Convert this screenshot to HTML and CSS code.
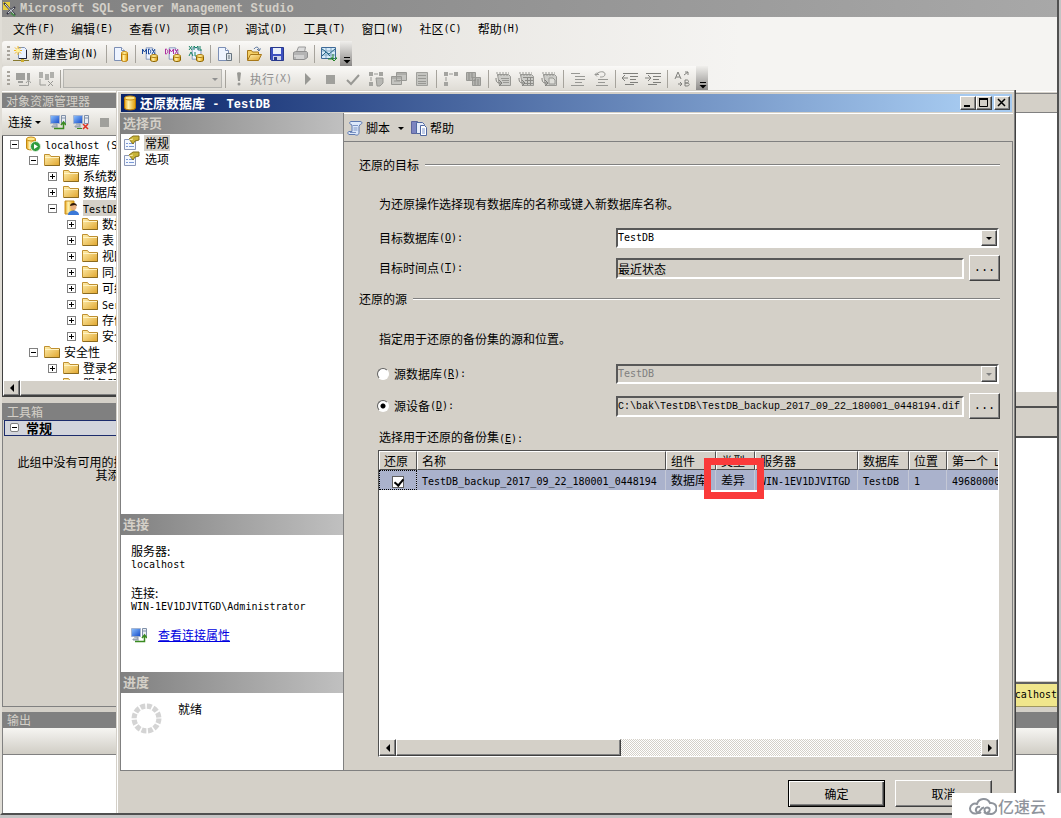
FILE: index.html
```html
<!DOCTYPE html>
<html lang="zh-CN">
<head>
<meta charset="utf-8">
<title>Microsoft SQL Server Management Studio</title>
<link rel="stylesheet" href="styles.css">
</head>
<body>
<svg class="defs" aria-hidden="true">
  <defs>
    <linearGradient id="gold" x1="0" x2="1" y1="0" y2="0"><stop offset="0" stop-color="#e8a010"/><stop offset=".35" stop-color="#fff3b0"/><stop offset="1" stop-color="#e09a00"/></linearGradient>
    <linearGradient id="fold" x1="0" x2="1" y1="0" y2="1"><stop offset="0" stop-color="#fff0b0"/><stop offset="1" stop-color="#e0a52c"/></linearGradient>
    <linearGradient id="screen" x1="0" x2="1" y1="0" y2="1"><stop offset="0" stop-color="#8fc4ff"/><stop offset="1" stop-color="#1148c8"/></linearGradient>
  </defs>
  <symbol id="page" viewBox="0 0 16 16"><path d="M2.500 1.500h7l3 3v10h-10z" fill="#eef4ff" stroke="#7c8fb5"/><path d="M9.500 1.500v3h3" fill="#fff" stroke="#7c8fb5"/></symbol>
  <symbol id="cyl" viewBox="0 0 16 16"><path d="M2.500 3v10c0 2.500 11 2.500 11 0V3z" fill="url(#gold)" stroke="#b87800"/><ellipse cx="8" cy="3" rx="5.500" ry="2" fill="#ffe98a" stroke="#c88a10"/></symbol>
  <symbol id="app" viewBox="0 0 16 16"><path d="M1 1h7v8H1z" fill="#e9cf3c"/><path d="M2 2l11 12M13 6l-8 7" stroke="#334" stroke-width="2"/><path d="M3 3l9 10M12 7l-6 5" stroke="#e8eef0"/><path d="M9 12l4 3" stroke="#4a8a4a" stroke-width="2"/></symbol>
  <symbol id="newq" viewBox="0 0 16 16"><path d="M5.500 1.500h6l2 2v9h-8z" fill="#eaf2ff" stroke="#7c8fb5"/><path d="M13.500 4v8.500H6" fill="none" stroke="#223"/><path d="M5 0v9M1 4.500h8M2 1.500l6 6M8 1.500l-6 6" stroke="#f5b820"/><circle cx="5" cy="4.500" r="2" fill="#fff2a0"/><path d="M0 14.500h16" stroke="#887a30"/><path d="M8 13h3v3H8z" fill="#d0b030"/></symbol>
  <symbol id="dbpage" viewBox="0 0 16 16"><use href="#page" x="-1" width="16" height="16"/><path d="M8.500 7v7c0 2 6 2 6 0V7z" fill="url(#gold)" stroke="#b87800"/><ellipse cx="11.500" cy="7" rx="3" ry="1.500" fill="#ffe98a" stroke="#c88a10"/></symbol>
  <symbol id="minicyl" viewBox="0 0 8 8"><path d="M.500 2v4c0 2 7 2 7 0V2z" fill="url(#gold)" stroke="#8a6400"/><ellipse cx="4" cy="2" rx="3.500" ry="1.500" fill="#ffe98a" stroke="#a87810"/></symbol>
  <symbol id="mdx" viewBox="0 0 16 16"><use href="#page" x="2" width="14" height="15"/><path d="M.500 8V3l2 3 2-3v5M6.500 3v5c3 0 3-5 0-5M10 3l3 5M13 3l-3 5" fill="none" stroke="#1c4a9c"/><use href="#minicyl" x="8" y="8" width="8" height="8"/></symbol>
  <symbol id="dmx" viewBox="0 0 16 16"><use href="#page" x="2" width="14" height="15"/><path d="M.500 3v5c3 0 3-5 0-5M4.500 8V3l2 3 2-3v5M10 3l3 5M13 3l-3 5" fill="none" stroke="#b030a0"/><use href="#minicyl" x="8" y="8" width="8" height="8"/></symbol>
  <symbol id="xmla" viewBox="0 0 16 16"><use href="#page" x="2" width="14" height="15"/><path d="M1 0l3 4M4 0L1 4M6 4V0l2 2 2-2v4M12 0v4h2M1 10l2-4 2 4M7 6v4h3" fill="none" stroke="#188468"/><use href="#minicyl" x="8" y="8" width="8" height="8"/></symbol>
  <symbol id="cepage" viewBox="0 0 16 16"><use href="#page" x="-1" width="16" height="16"/><path d="M9.500 7.500h5v7h-5z" fill="#dde4ea" stroke="#66737f"/><path d="M11 10h2M11 12h2" stroke="#66737f"/></symbol>
  <symbol id="open" viewBox="0 0 16 16"><path d="M1.500 14V4.500h4l1 1.500h6v3" fill="#f4cf66" stroke="#a87818"/><path d="M1.500 14.500l3-6h11l-3 6z" fill="url(#fold)" stroke="#a87818"/><path d="M8 3c2-3 5-2 5 1M11 3l2 2 1.500-2.500" fill="none" stroke="#54709c"/></symbol>
  <symbol id="save" viewBox="0 0 16 16"><path d="M1.500 1.500h13v13h-12l-1-1z" fill="#3c50c0" stroke="#28388c"/><path d="M4 2h8v6H4z" fill="#eaf0fa"/><path d="M4 10h8v4H4z" fill="#cdd4e8"/><path d="M5 11h3v3H5z" fill="#28388c"/></symbol>
  <symbol id="print" viewBox="0 0 16 16"><path d="M4.500 6l2-5h7l-1 5" fill="#ddd" stroke="#999"/><path d="M1.500 6.500l2-1h11l1 1v5l-3 2h-11z" fill="#b4b4b4" stroke="#909090"/><path d="M2 10h10M4 12h8" stroke="#eee"/></symbol>
  <symbol id="chart" viewBox="0 0 16 16"><path d="M.500 1.500h14v11H.500z" fill="#d8ecfa" stroke="#3f6a98"/><path d="M1 9h13M1 5h13M5 2v10M10 2v10" stroke="#84a8c4"/><path d="M1 3l3 2 5 5M1 10l4-4 3 2 6-5" fill="none" stroke="#2a6a8a"/><path d="M7 13h6M12 8v4h-2l3 3 3-3h-2" stroke="#248428" fill="none"/></symbol>
  <symbol id="ovf" viewBox="0 0 12 24"><path d="M4 15.500h6" stroke="#000"/><path d="M3.500 18h7L7 21.500z"/></symbol>
  <symbol id="srv" viewBox="0 0 16 16"><path d="M.500 1.500h9v8h-9z" fill="url(#screen)" stroke="#a4b4d0"/><path d="M3 10h4v2H2v1h6" fill="#c9cfd8" stroke="#8b98aa"/><path d="M11.500 1.500h4v8h-4z" fill="#e8edf4" stroke="#8090a8"/><path d="M12 4h3" stroke="#8090a8"/></symbol>
  <symbol id="conn" viewBox="0 0 16 16"><use href="#srv" width="16" height="16"/><path d="M4 14.500h9.500V9M11 11l2.500-3 2.500 3" fill="none" stroke="#3a8a20" stroke-width="1.500"/></symbol>
  <symbol id="disc" viewBox="0 0 16 16"><use href="#srv" width="16" height="16"/><path d="M4 14.500h5" stroke="#3a8a20"/><path d="M10 10l5 5M15 10l-5 5" stroke="#e03020" stroke-width="1.500"/></symbol>
  <symbol id="gconn" viewBox="0 0 16 16"><path d="M1 2h9v7H1zM3 10h5v2H3zM12 2h3v7h-3z" fill="#a0a09c"/><path d="M4 14.500h9.500V10M11 12l2.500-3 2.500 3" fill="none" stroke="#a0a09c"/></symbol>
  <symbol id="gchg" viewBox="0 0 16 16"><path d="M1 1h4v6H1zM7 3h4v6H7zM12 1h4v6h-4z" fill="#b0b0ac"/><path d="M2 8v6h6M10 10l5 5M15 10l-5 5" fill="none" stroke="#989894"/></symbol>
  <symbol id="bang" viewBox="0 0 16 16"><path d="M6 2c0-1 4-1 4 0L9 10H7z" fill="#989894"/><circle cx="8" cy="13" r="1.500" fill="#989894"/></symbol>
  <symbol id="play" viewBox="0 0 16 16"><path d="M6 2l6 6-6 6z" fill="#989894"/></symbol>
  <symbol id="stop" viewBox="0 0 16 16"><path d="M4 4h9v9H4z" fill="#a0a09c"/></symbol>
  <symbol id="check" viewBox="0 0 16 16"><path d="M2 9l4 4 8-9" fill="none" stroke="#989894" stroke-width="2"/></symbol>
  <symbol id="plan" viewBox="0 0 16 16"><path d="M1 1h4v4H1zM11 1h4v4h-4zM1 11h4v4H1z" fill="#a4a4a0"/><path d="M6 3h4M3 6v4" stroke="#989894"/><path d="M8 7h7v5l-3 3H9z" fill="#b8b8b4" stroke="#989894"/></symbol>
  <symbol id="wins" viewBox="0 0 16 16"><path d="M5.500 1.500h10v8h-10zM.500 5.500h10v8H.500z" fill="#c4c4c0" stroke="#989894"/><path d="M6 3h9M1 7h9M3 10h6" stroke="#989894"/></symbol>
  <symbol id="sheet" viewBox="0 0 16 16"><path d="M2.500 1.500h11v13h-11z" fill="#c4c4c0" stroke="#a0a09c"/><path d="M4 4.500h8M4 7.500h8M4 10.500h8M4 12.500h8" stroke="#989894"/></symbol>
  <symbol id="plan2" viewBox="0 0 16 16"><path d="M1 1h4v4H1zM11 1h4v4h-4zM1 11h4v4H1z" fill="#a4a4a0"/><path d="M6 3h4M3 6v4" stroke="#989894"/></symbol>
  <symbol id="stats" viewBox="0 0 16 16"><path d="M.500 1.500h9v8h-9zM6.500 6.500h8v8h-8z" fill="#b4b4b0" stroke="#989894"/><path d="M3 2v7M6 2v5M9 8v6M12 8v6" stroke="#8c8c88"/></symbol>
  <symbol id="resbase" viewBox="0 0 16 16"><path d="M2.500 3.500h11l2 2v9h-11z" fill="#ccccc8" stroke="#989894"/><path d="M1 2h13M2 4h12" stroke="#989894" stroke-dasharray="2 1"/><path d="M1 7c0 5 2 5 5 5M4 9l3 3-3 3" fill="none" stroke="#80807c"/></symbol>
  <symbol id="restext" viewBox="0 0 16 16"><use href="#resbase" width="16" height="16"/><path d="M6 7.500h8M7 9.500h7M8 11.500h6" stroke="#989894"/></symbol>
  <symbol id="resgrid" viewBox="0 0 16 16"><use href="#resbase" width="16" height="16"/><path d="M5 6.500h10M7 9.500h8M7 12.500h8M9.500 6v8M12.500 6v8" stroke="#8c8c88"/></symbol>
  <symbol id="resfile" viewBox="0 0 16 16"><use href="#resbase" width="16" height="16"/><path d="M8 7h4l2 2v4H8z" fill="#deded9" stroke="#989894"/></symbol>
  <symbol id="lines" viewBox="0 0 16 16"><path d="M1 2.500h9M5 5.500h10M5 8.500h10M5 11.500h7M1 14.500h13" stroke="#989894"/></symbol>
  <symbol id="unline" viewBox="0 0 16 16"><path d="M5 8.500h10M5 11.500h7M3 14.500h12M2 3.500h4M4 5.500L2 3.500l2-2M4 3c2-3 8-3 8 0s-3 3-5 3" fill="none" stroke="#989894"/></symbol>
  <symbol id="outd" viewBox="0 0 16 16"><path d="M1 2.500h15M8 5.500h8M8 8.500h6M8 11.500h8M3 13.500h9M0 7h6M3 4L0 7l3 3" fill="none" stroke="#80807c"/></symbol>
  <symbol id="ind" viewBox="0 0 16 16"><path d="M1 2.500h15M8 5.500h8M8 8.500h6M8 11.500h8M3 13.500h9M0 7h6M3 4l3 3-3 3" fill="none" stroke="#80807c"/></symbol>
  <symbol id="ab" viewBox="0 0 16 16"><path d="M1 8l3-7 3 7M2 6h4M11 15V9h2c2 0 2 3 0 3h-2 2c3 0 3 3 0 3zM10 4l4-3M11 1h3v3M4 13h4M6 11l2 2-2 2" fill="none" stroke="#80807c"/></symbol>
  <symbol id="folder" viewBox="0 0 16 16"><path d="M.500 13.500v-11h5l1.500 2h8.500v9z" fill="url(#fold)" stroke="#c09030"/><path d="M1 5.500h14" stroke="#fff3c4"/><path d="M1 13.500h14.500V5" fill="none" stroke="#8a6a20"/></symbol>
  <symbol id="dbsrv" viewBox="0 0 16 16"><path d="M1.500 3v9c0 2.500 9 2.500 9 0V3z" fill="url(#gold)" stroke="#c08810"/><ellipse cx="6" cy="3" rx="4.500" ry="2" fill="#ffe98a" stroke="#c88a10"/><circle cx="10.500" cy="10.500" r="5" fill="#2e9a3c" stroke="#dff0df"/><path d="M9 8l4 2.500L9 13z" fill="#fff"/></symbol>
  <symbol id="dbuser" viewBox="0 0 16 16"><path d="M2 1h9v13H2z" fill="url(#gold)" stroke="#c89020"/><circle cx="10.500" cy="7" r="3" fill="#e8b080"/><path d="M7 6c0-4 7-4 7 0l-2-1z" fill="#301808"/><path d="M5 15c0-6 11-6 11 0z" fill="#3a78d8"/></symbol>
  <symbol id="prop" viewBox="0 0 16 16"><path d="M.500 4.500h11v10H.500z" fill="#f4f8ff" stroke="#8c98b8"/><path d="M2 8.500h2M5 8.500h5M2 11.500h2M5 11.500h5" stroke="#7a9ad8"/><path d="M5 4l4-3h6v4l-4 1-2 3z" fill="#c8b438" stroke="#847018"/><path d="M5 5l4-1" stroke="#fff0b0"/></symbol>
  <symbol id="script" viewBox="0 0 16 16"><path d="M4 1.500h9c3 0 2 3 0 3l-1 2v6c0 3-3 3-4 2H2c-2-1-1-3 0-3h3V5C2 4 2 2 4 1.500z" fill="#dce8fa" stroke="#5c78b0"/><path d="M6 5.500h5M6.500 8h4M6.500 10h4M3 12.500h6" stroke="#7c94c4"/></symbol>
  <symbol id="help" viewBox="0 0 16 16"><path d="M.500 1.500h6v12h-6z" fill="#7c84c0" stroke="#5c649c"/><path d="M5.500 2.500h6l2 2v9h-8z" fill="#e6ecfa" stroke="#5068a0"/><path d="M9.500 5.500h4l2 2v8h-6z" fill="#fff" stroke="#5068a0"/><path d="M11 9h3M11 11h3M11 13h3" fill="none" stroke="#8098d0"/></symbol>
  <symbol id="down" viewBox="0 0 8 8"><path d="M1 3h6L4 6z" fill="currentColor"/></symbol>
  <symbol id="lft" viewBox="0 0 8 8"><path d="M6 0v8L2 4z"/></symbol>
  <symbol id="rgt" viewBox="0 0 8 8"><path d="M2 0v8l4-4z"/></symbol>
</svg>

<div class="window">
  <header class="titlebar"><svg class="ic"><use href="#app"/></svg><span>Microsoft SQL Server Management Studio</span></header>
  <nav class="menu">
    <button>文件<i>(F)</i></button><button>编辑<i>(E)</i></button><button>查看<i>(V)</i></button><button>项目<i>(P)</i></button><button>调试<i>(D)</i></button><button>工具<i>(T)</i></button><button>窗口<i>(W)</i></button><button>社区<i>(C)</i></button><button>帮助<i>(H)</i></button>
  </nav>
  <div class="bars">
    <div class="bar first">
      <span class="grip"></span>
      <button class="wide"><svg class="ic"><use href="#newq"/></svg>新建查询<i>(N)</i></button><span class="sep"></span>
      <button aria-label="数据库引擎查询"><svg class="ic"><use href="#dbpage"/></svg></button><span class="sep"></span>
      <button aria-label="MDX"><svg class="ic"><use href="#mdx"/></svg></button>
      <button aria-label="DMX"><svg class="ic"><use href="#dmx"/></svg></button>
      <button aria-label="XMLA"><svg class="ic"><use href="#xmla"/></svg></button><span class="sep"></span>
      <button aria-label="Compact"><svg class="ic"><use href="#cepage"/></svg></button><span class="sep"></span>
      <button aria-label="打开"><svg class="ic"><use href="#open"/></svg></button>
      <button aria-label="保存"><svg class="ic"><use href="#save"/></svg></button>
      <button aria-label="打印"><svg class="ic"><use href="#print"/></svg></button><span class="sep"></span>
      <button aria-label="活动监视器"><svg class="ic"><use href="#chart"/></svg></button>
      <button class="ovf" aria-label="更多"><svg><use href="#ovf"/></svg></button>
    </div>
    <div class="bar second">
      <span class="grip"></span>
      <button aria-label="连接"><svg class="ic"><use href="#gconn"/></svg></button>
      <button aria-label="更改连接"><svg class="ic"><use href="#gchg"/></svg></button><span class="sep"></span>
      <div class="combo barcombo"><select disabled aria-label="可用数据库"><option></option></select><svg class="arrow"><use href="#down"/></svg></div><span class="sep"></span>
      <button class="exec" disabled><svg class="ic"><use href="#bang"/></svg>执行<i>(X)</i></button>
      <button aria-label="调试"><svg class="ic"><use href="#play"/></svg></button>
      <button aria-label="停止"><svg class="ic"><use href="#stop"/></svg></button>
      <button aria-label="分析"><svg class="ic"><use href="#check"/></svg></button>
      <button aria-label="估计计划"><svg class="ic"><use href="#plan"/></svg></button>
      <button aria-label="查询选项"><svg class="ic"><use href="#wins"/></svg></button>
      <button aria-label="智能感知"><svg class="ic"><use href="#sheet"/></svg></button><span class="sep"></span>
      <button aria-label="实际计划"><svg class="ic"><use href="#plan2"/></svg></button>
      <button aria-label="统计信息"><svg class="ic"><use href="#stats"/></svg></button><span class="sep"></span>
      <button aria-label="文本结果"><svg class="ic"><use href="#restext"/></svg></button>
      <button aria-label="网格结果"><svg class="ic"><use href="#resgrid"/></svg></button>
      <button aria-label="文件结果"><svg class="ic"><use href="#resfile"/></svg></button><span class="sep"></span>
      <button aria-label="注释"><svg class="ic"><use href="#lines"/></svg></button>
      <button aria-label="取消注释"><svg class="ic"><use href="#unline"/></svg></button><span class="sep"></span>
      <button aria-label="减少缩进"><svg class="ic"><use href="#outd"/></svg></button>
      <button aria-label="增加缩进"><svg class="ic"><use href="#ind"/></svg></button><span class="sep"></span>
      <button aria-label="模板参数"><svg class="ic"><use href="#ab"/></svg></button>
      <button class="ovf" aria-label="更多"><svg><use href="#ovf"/></svg></button>
    </div>
  </div>

  <div class="work">
    <aside class="docks">
      <section class="dock explorer">
        <h2>对象资源管理器</h2>
        <div class="docktools"><button class="conn">连接<svg class="arrow"><use href="#down"/></svg></button><button aria-label="连接"><svg class="ic"><use href="#conn"/></svg></button><button aria-label="断开"><svg class="ic"><use href="#disc"/></svg></button><button aria-label="停止"><svg class="ic"><use href="#stop"/></svg></button></div>
        <div class="tree">
          <div class="node l0"><button class="exp minus" aria-label="折叠"></button><svg class="ic"><use href="#dbsrv"/></svg><span><i>localhost (SQL</i></span></div>
          <div class="node l1"><button class="exp minus" aria-label="折叠"></button><svg class="ic"><use href="#folder"/></svg><span>数据库</span></div>
          <div class="node l2"><button class="exp" aria-label="展开"></button><svg class="ic"><use href="#folder"/></svg><span>系统数据库</span></div>
          <div class="node l2"><button class="exp" aria-label="展开"></button><svg class="ic"><use href="#folder"/></svg><span>数据库快照</span></div>
          <div class="node l2"><button class="exp minus" aria-label="折叠"></button><svg class="ic"><use href="#dbuser"/></svg><span class="sel"><i>TestDB</i></span></div>
          <div class="node l3"><button class="exp" aria-label="展开"></button><svg class="ic"><use href="#folder"/></svg><span>数据库关系图</span></div>
          <div class="node l3"><button class="exp" aria-label="展开"></button><svg class="ic"><use href="#folder"/></svg><span>表</span></div>
          <div class="node l3"><button class="exp" aria-label="展开"></button><svg class="ic"><use href="#folder"/></svg><span>视图</span></div>
          <div class="node l3"><button class="exp" aria-label="展开"></button><svg class="ic"><use href="#folder"/></svg><span>同义词</span></div>
          <div class="node l3"><button class="exp" aria-label="展开"></button><svg class="ic"><use href="#folder"/></svg><span>可编程性</span></div>
          <div class="node l3"><button class="exp" aria-label="展开"></button><svg class="ic"><use href="#folder"/></svg><span><i>Service Broker</i></span></div>
          <div class="node l3"><button class="exp" aria-label="展开"></button><svg class="ic"><use href="#folder"/></svg><span>存储</span></div>
          <div class="node l3"><button class="exp" aria-label="展开"></button><svg class="ic"><use href="#folder"/></svg><span>安全性</span></div>
          <div class="node l1"><button class="exp minus" aria-label="折叠"></button><svg class="ic"><use href="#folder"/></svg><span>安全性</span></div>
          <div class="node l2"><button class="exp" aria-label="展开"></button><svg class="ic"><use href="#folder"/></svg><span>登录名</span></div>
          <div class="node l2"><button class="exp" aria-label="展开"></button><svg class="ic"><use href="#folder"/></svg><span>服务器角色</span></div>
        </div>
        <div class="scroll"><button aria-label="向左"><svg><use href="#lft"/></svg></button><span class="thumb"></span></div>
      </section>
      <section class="dock toolbox">
        <h2>工具箱</h2>
        <div class="group"><button class="exp minus soft" aria-label="折叠"></button><b>常规</b></div>
        <p>此组中没有可用的控件。将某项拖至此文本可将<br>其添加到工具箱。</p>
      </section>
    </aside>
    <main class="editor">
      <div class="tabs"></div>
      <div class="code"></div>
      <div class="results"></div>
      <div class="grid"></div>
      <div class="status"><i>localhost</i></div>
    </main>
  </div>
  <section class="output">
    <h2>输出</h2>
    <div class="outtools"></div>
  </section>
</div>

<div class="dialog" role="dialog" aria-labelledby="dlgtitle">
  <header class="dlgtitle">
    <svg class="ic"><use href="#cyl"/></svg><h1 id="dlgtitle">还原数据库<i> - TestDB</i></h1>
    <div class="winbtns">
      <button aria-label="最小化"><svg viewBox="0 0 12 10"><path d="M2 8h6" stroke="#000" stroke-width="2"/></svg></button><button aria-label="最大化"><svg viewBox="0 0 12 10"><path d="M1.500 1v7.500h8V1" fill="none" stroke="#000"/><path d="M1 1h9" stroke="#000" stroke-width="2"/></svg></button><button class="close" aria-label="关闭"><svg viewBox="0 0 12 10"><path d="M2 1l7 7M9 1L2 8" stroke="#000" stroke-width="1.500"/></svg></button>
    </div>
  </header>
  <div class="dlgbody">
    <aside class="side">
      <h2>选择页</h2>
      <div class="pages">
        <button><svg class="ic"><use href="#prop"/></svg><span class="sel">常规</span></button>
        <button><svg class="ic"><use href="#prop"/></svg><span>选项</span></button>
      </div>
      <h2>连接</h2>
      <div class="conninfo">
        <dl><dt>服务器:</dt><dd><i>localhost</i></dd><dt>连接:</dt><dd><i>WIN-1EV1DJVITGD\Administrator</i></dd></dl>
        <div class="linkrow"><svg class="ic"><use href="#conn"/></svg><a href="#">查看连接属性</a></div>
      </div>
      <h2>进度</h2>
      <div class="progress"><svg viewBox="0 0 30 30"><circle cx="15" cy="15" r="12" fill="none" stroke="#d4d4d4" stroke-width="5" stroke-dasharray="4.700 1.583"/></svg><span>就绪</span></div>
    </aside>
    <section class="pane">
      <div class="panetools"><button><svg class="ic"><use href="#script"/></svg>脚本<svg class="arrow"><use href="#down"/></svg></button><button><svg class="ic"><use href="#help"/></svg>帮助</button></div>
      <form class="form">
        <h3>还原的目标</h3>
        <p>为还原操作选择现有数据库的名称或键入新数据库名称。</p>
        <div class="row"><label for="tdb">目标数据库<i>(<u>O</u>):</i></label><div class="combo"><select id="tdb"><option>TestDB</option></select><span class="drop"><svg class="arrow"><use href="#down"/></svg></span></div></div>
        <div class="row pick"><label for="tpt">目标时间点<i>(<u>T</u>):</i></label><input id="tpt" class="cn" type="text" value="最近状态" readonly><button type="button">...</button></div>
        <h3 class="src">还原的源</h3>
        <p>指定用于还原的备份集的源和位置。</p>
        <div class="row"><label><input type="radio" name="src">源数据库<i>(<u>R</u>):</i></label><div class="combo off"><select disabled aria-label="源数据库"><option>TestDB</option></select><span class="drop"><svg class="arrow"><use href="#down"/></svg></span></div></div>
        <div class="row pick dev"><label><input type="radio" name="src" checked>源设备<i>(<u>D</u>):</i></label><input type="text" aria-label="源设备" value="C:\bak\TestDB\TestDB_backup_2017_09_22_180001_0448194.dif" readonly><button type="button">...</button></div>
        <p class="sets">选择用于还原的备份集<i>(<u>E</u>):</i></p>
        <div class="sheet">
          <div class="clip">
            <table>
              <colgroup><col class="c1"><col class="c2"><col class="c3"><col class="c4"><col class="c5"><col class="c6"><col class="c7"><col class="c8"></colgroup>
              <thead><tr><th>还原</th><th>名称</th><th>组件</th><th>类型</th><th>服务器</th><th>数据库</th><th>位置</th><th>第一个<i> L</i></th></tr></thead>
              <tbody><tr><td class="tick"><input type="checkbox" checked aria-label="还原"></td><td><i>TestDB_backup_2017_09_22_180001_0448194</i></td><td>数据库</td><td class="marked">差异<span class="mark"></span></td><td><i>WIN-1EV1DJVITGD</i></td><td><i>TestDB</i></td><td><i>1</i></td><td><i>49680000</i></td></tr></tbody>
            </table>
          </div>
          <div class="scroll"><button type="button" aria-label="向左"><svg><use href="#lft"/></svg></button><span class="thumb"></span><span class="track"></span><button type="button" aria-label="向右"><svg><use href="#rgt"/></svg></button></div>
        </div>
      </form>
    </section>
  </div>
  <footer class="actions"><button class="ok">确定</button><button>取消</button></footer>
</div>

<div class="brand"><svg viewBox="0 0 28 20"><path d="M7 17.500a5 5 0 1 1 1-9.500a7 7 0 0 1 13-1a5.500 5.500 0 1 1-1 10.500c-5 1-6-6-2-6s3 5 0 5" fill="none" stroke="#8f949c" stroke-width="2"/><path d="M7 17.500c4 0 4-6 8-6M11 11a3 3 0 1 0 1 5M15 16c1 1 3 2 5 1.500" fill="none" stroke="#8f949c" stroke-width="2"/></svg><span>亿速云</span></div>
</body>
</html>
```
FILE: styles.css
```css
* { box-sizing: border-box; }
body {
  margin: 0;
  background: #c4c4c4;
  color: #000;
  font: 12px/16px "Noto Sans CJK SC", sans-serif;
  min-height: 100vh;
  position: relative;
  overflow: hidden;
  display: flex;
}
i { font: 10px/12px "DejaVu Sans Mono", monospace; white-space: pre; }
h1, h2, h3, p, dl, dd { margin: 0; font-weight: normal; }
button, select, input { font: inherit; color: inherit; margin: 0; border-radius: 0; }
button { border: 0; padding: 0; background: none; display: flex; align-items: center; white-space: nowrap; }
.defs { position: absolute; width: 0; height: 0; }
.ic { width: 16px; height: 16px; flex: none; }
.arrow { width: 8px; height: 8px; flex: none; }

.window {
  flex: 1;
  min-width: 0;
  margin: 0 2px 3px 0;
  border-right: 2px solid #505050;
  border-bottom: 2px solid #505050;
  border-left: 2px solid #e0ddd6;
  background: #d4d0c8;
  display: flex;
  flex-direction: column;
}
.titlebar {
  height: 17px;
  display: flex;
  align-items: center;
  gap: 2px;
  background: linear-gradient(90deg, #808080, #a8a8a8);
  color: #d4d0c8;
  font: bold 12px/16px "Liberation Mono", monospace;
}
.menu { height: 24px; display: flex; padding-left: 3px; background: linear-gradient(90deg, #dad7d0, #f5f4f2 70%); }
.menu button { padding: 0 8px; }
.bars { background: linear-gradient(90deg, #dad7d0, #f5f4f2 70%); border-bottom: 1px solid #fff; }
.bar { display: flex; align-items: center; width: max-content; padding-left: 5px; background: linear-gradient(#faf9f7, #dedbd4); border-radius: 3px; }
.first { height: 25px; }
.second { height: 25px; color: #909090; }
.bar button { width: 23px; height: 23px; justify-content: center; }
.bar .wide { width: 92px; justify-content: flex-start; padding-left: 2px; }
.wide .ic { margin-right: 3px; }
.bar .exec { width: 67px; }
.exec .ic { margin-right: 3px; }
.bar .ovf { width: 12px; height: 25px; background: linear-gradient(#f0efec, #8a8886); }
.second .ovf { margin-left: 3px; }
.ovf svg { width: 12px; height: 24px; }
.grip { width: 3px; height: 15px; margin-right: 1px; background: repeating-linear-gradient(#a8a49c 0 2px, transparent 2px 4px); }
.sep { width: 6px; height: 18px; background: linear-gradient(#a6a39c, #a6a39c) center / 1px 100% no-repeat; }
.barcombo { width: 159px; height: 19px; }
.barcombo select { border: 1px solid #a0a09c; background: #d4d0c8; }
.barcombo .arrow { position: absolute; right: 3px; top: 6px; color: #909090; }

.work { flex: 1; display: flex; min-height: 0; gap: 4px; padding-top: 1px; }
.docks { width: 282px; display: flex; flex-direction: column; gap: 6px; }
.dock { flex: 1 1 0; min-height: 0; display: flex; flex-direction: column; }
.dock h2, .output h2 { background: #808080; color: #d4d0c8; font-size: 12px; line-height: 16px; padding-left: 4px; }
.dock h2 { line-height: 15px; }
.toolbox h2 { line-height: 17px; }
.docktools { height: 28px; display: flex; align-items: center; background: linear-gradient(#f6f5f2, #d6d3cb); padding-left: 6px; border-bottom: 1px solid #808080; }
.docktools button { width: 23px; justify-content: center; }
.docktools .conn { width: 38px; gap: 2px; justify-content: flex-start; }
.tree { flex: 1; min-height: 0; overflow: hidden; background: #fff; border-left: 1px solid #404040; }
.node { display: flex; align-items: center; height: 16px; white-space: nowrap; }
.node .ic { margin: 0 4px 0 6px; }
.l0 { padding-left: 7px; }
.l1 { padding-left: 26px; }
.l2 { padding-left: 45px; }
.l3 { padding-left: 64px; }
.sel { background: #d4d0c8; }
.exp {
  width: 9px;
  height: 9px;
  flex: none;
  border: 1px solid #808080;
  background: linear-gradient(#000, #000) center / 5px 1px no-repeat, linear-gradient(#000, #000) center / 1px 5px no-repeat, #fff;
}
.exp.minus { background: linear-gradient(#000, #000) center / 5px 1px no-repeat, #fff; }
.exp.soft { border-radius: 2px; }
.explorer > .scroll { border-left: 1px solid #404040; border-bottom: 1px solid #404040; }
.explorer .thumb { flex: 1; }
.toolbox { border: solid #808080; border-width: 0 0 1px 1px; }
.group { display: flex; align-items: center; gap: 7px; height: 16px; margin-left: 1px; padding-left: 5px; border: 1px solid #1c2c6c; background: #d3d5dc; font-size: 13px; }
.toolbox p { text-align: center; line-height: 13px; margin-top: 19px; white-space: nowrap; }

.scroll { display: flex; height: 17px; background: #d4d0c8; }
.scroll button, .thumb, .drop, .winbtns button {
  background: #d4d0c8;
  border: 1px solid;
  border-color: #fff #404040 #404040 #fff;
  box-shadow: inset -1px -1px #808080;
}
.scroll button { width: 17px; justify-content: center; flex: none; }
.scroll svg { width: 8px; height: 8px; }
.track { flex: 1; background: repeating-conic-gradient(#fff 0 25%, #d4d0c8 0 50%) 0 0 / 2px 2px; }

.editor { flex: 1; min-width: 0; display: flex; flex-direction: column; }
.tabs { height: 20px; border: solid #808080; border-width: 1px 0; }
.code { flex: 280 1 0; background: #fff; }
.results { height: 46px; border-bottom: 2px solid #505050; background: linear-gradient(#505050, #505050) 0 14px / 100% 2px no-repeat; }
.grid { flex: 243 1 0; background: #fff; border-bottom: 1px solid #d4d0c8; }
.status { height: 25px; border-top: 2px solid #606060; border-bottom: 1px solid #a09860; background: #f0e68c; display: flex; align-items: center; justify-content: flex-end; }
.output { height: 101px; margin-top: 5px; background: #fff; border-left: 1px solid #808080; }
.outtools { height: 27px; background: linear-gradient(#f6f5f2, #d0cdc5); border-bottom: 1px solid #808080; }

.dialog {
  position: absolute;
  top: 90px;
  right: 45px;
  bottom: 3px;
  left: 116px;
  padding: 4px 3px 0 4px;
  background: #d4d0c8;
  border-bottom: 2px solid #505050;
  box-shadow: inset -1px 0 #404040, inset -2px 0 #808080, inset 1px 1px #d4d0c8, inset 2px 2px #fff;
  display: flex;
  flex-direction: column;
}
.dlgtitle { height: 18px; display: flex; align-items: center; margin: 0 1px; padding: 0 2px 0 1px; background: linear-gradient(90deg, #0a246a, #a6caf0 95%); color: #fff; }
.dlgtitle h1 { flex: 1; margin-left: 2px; font-size: 13px; line-height: 18px; font-weight: bold; }
.dlgtitle i { font: bold 12px/14px "Liberation Mono", monospace; }
.winbtns { display: flex; }
.winbtns button { width: 16px; height: 14px; justify-content: center; }
.winbtns .close { margin-left: 2px; }
.winbtns svg { width: 12px; height: 10px; }
.dlgbody { flex: 1; min-height: 0; display: flex; margin-top: 1px; border-bottom: 1px solid #808080; }
.side { width: 224px; display: flex; flex-direction: column; background: #fff; border: solid #808080; border-width: 0 1px; }
.side h2 { height: 21px; padding: 0 2px; font-size: 13px; line-height: 20px; font-weight: bold; color: #d4d0c8; background: linear-gradient(90deg, #808080, #c0c0c0); }
.pages { flex: 1; padding-top: 1px; }
.pages button { gap: 4px; padding-left: 3px; height: 16px; }
.pages span { padding: 0 1px; }
.conninfo { height: 137px; padding: 10px; }
.conninfo dt { line-height: 12px; }
.conninfo dd { line-height: 12px; height: 30px; }
.linkrow { display: flex; align-items: center; gap: 11px; margin-top: -2px; }
.linkrow a { color: #0000e0; }
.progress { height: 77px; display: flex; gap: 16px; padding: 10px; line-height: 12px; }
.progress svg { width: 31px; height: 31px; }
.pane { flex: 1; min-width: 0; display: flex; flex-direction: column; }
.panetools { height: 29px; display: flex; align-items: center; gap: 6px; padding-left: 3px; border-top: 1px solid #fff; border-bottom: 1px solid #808080; }
.panetools button { gap: 3px; height: 24px; }
.panetools .arrow { margin-left: 4px; }
.form { flex: 1; min-height: 0; display: flex; flex-direction: column; padding: 15px 12px 13px 15px; border-right: 1px solid #808080; }
.form h3 { display: flex; align-items: center; gap: 6px; font-size: 12px; line-height: 16px; }
.form h3::after { content: ""; flex: 1; border-top: 1px solid #808080; border-bottom: 1px solid #fff; }
.form p { margin: 23px 0 16px 20px; }
.form .src { margin-top: 10px; }
.form .src + p { margin: 24px 0 17px 20px; }
.row { display: flex; align-items: center; height: 20px; padding-left: 20px; gap: 5px; }
.row > label { width: 232px; display: flex; align-items: center; flex: none; }
.row label input { width: 12px; height: 12px; margin: 0 5px 0 -2px; }
input[type="radio"] { appearance: none; border-radius: 50%; border: 1px solid; border-color: #606060 #fff #fff #606060; background: #fff; }
input[type="radio"]:checked { background: radial-gradient(#000 0 2px, #fff 3px); }
.combo { position: relative; display: flex; }
.form .combo { flex: 1; margin-right: 1px; height: 20px; }
.combo select { appearance: none; width: 100%; padding: 0; }
.form select, .row input[type="text"] {
  border: 2px solid;
  border-color: #585858 #fff #fff #585858;
  background: #fff;
  padding: 0;
  font: 10px/16px "DejaVu Sans Mono", monospace;
}
.drop { position: absolute; top: 2px; right: 2px; bottom: 2px; width: 16px; display: flex; align-items: center; justify-content: center; }
.form .off select { background: #d4d0c8; color: #808080; opacity: 1; }
.off .drop { color: #808080; }
.pick { height: 26px; margin-top: 7px; }
.dev { margin-top: 9px; }
.row input[type="text"] { flex: 1; min-width: 0; height: 21px; background: #d4d0c8; font: 10px/17px "Liberation Mono", monospace; }
.row input.cn[type="text"] { font: 12px/16px "Noto Sans CJK SC", sans-serif; }
.row button { width: 31px; height: 26px; justify-content: center; font: 12px/16px "Liberation Mono", monospace; }
.row button, .actions button { background: #d4d0c8; border: 1px solid; border-color: #fff #404040 #404040 #fff; box-shadow: inset -1px -1px #808080; }
.form .sets { margin: 10px 0 5px 20px; }
.sheet { flex: 1; min-height: 0; margin-left: 19px; margin-right: 1px; display: flex; flex-direction: column; border: 1px solid; border-color: #505050 #fff #fff #505050; background: #fff; }
.clip { flex: 1; min-height: 0; overflow: hidden; }
table { table-layout: fixed; width: 100%; border-collapse: separate; border-spacing: 0; }
.c1 { width: 38px; } .c2 { width: 249px; } .c3 { width: 50px; } .c4 { width: 39px; }
.c5 { width: 103px; } .c6 { width: 51px; } .c7 { width: 38px; } .c8 { width: auto; }
th, td { padding: 0 0 0 5px; text-align: left; font-weight: normal; white-space: nowrap; overflow: hidden; }
th { height: 19px; line-height: 16px; background: #d4d0c8; border: 1px solid; border-color: #fff #505050 #505050 #fff; padding-left: 4px; }
th:last-child, td:last-child { border-right: 0; }
td { height: 20px; line-height: 16px; padding-bottom: 1px; background: #aab2cc; border-right: 1px solid #c4c8d6; }
.tick { outline: 1px dotted #000; outline-offset: -1px; text-align: center; padding: 0; }
.tick input { appearance: none; width: 12px; height: 12px; border: 1px solid #606060; vertical-align: middle; background: #fff; position: relative; }
.tick input:checked::after { content: ""; position: absolute; left: 3px; top: 0; width: 4px; height: 7px; border: solid #000; border-width: 0 2px 2px 0; transform: rotate(40deg); }
.marked { position: relative; overflow: visible; }
.mark { position: absolute; inset: -12px -10px -9px -12px; border: 7px solid #fa3a3a; }
.sheet .thumb { flex: 0 1 225px; }
.actions { height: 42px; display: flex; justify-content: flex-end; align-items: flex-start; gap: 10px; padding: 9px 21px 0 0; }
.actions button { width: 97px; height: 27px; justify-content: center; }
.actions .ok { border-color: #000; box-shadow: inset 1px 1px #fff, inset -1px -1px #404040, inset -2px -2px #808080; }

.brand { position: absolute; right: 0; bottom: 0; width: 109px; height: 25px; background: #fff; display: flex; align-items: center; gap: 1px; padding-left: 17px; color: #8f949c; font-size: 16px; font-weight: 500; line-height: 24px; }
.brand svg { width: 28px; height: 20px; flex: none; }
```
